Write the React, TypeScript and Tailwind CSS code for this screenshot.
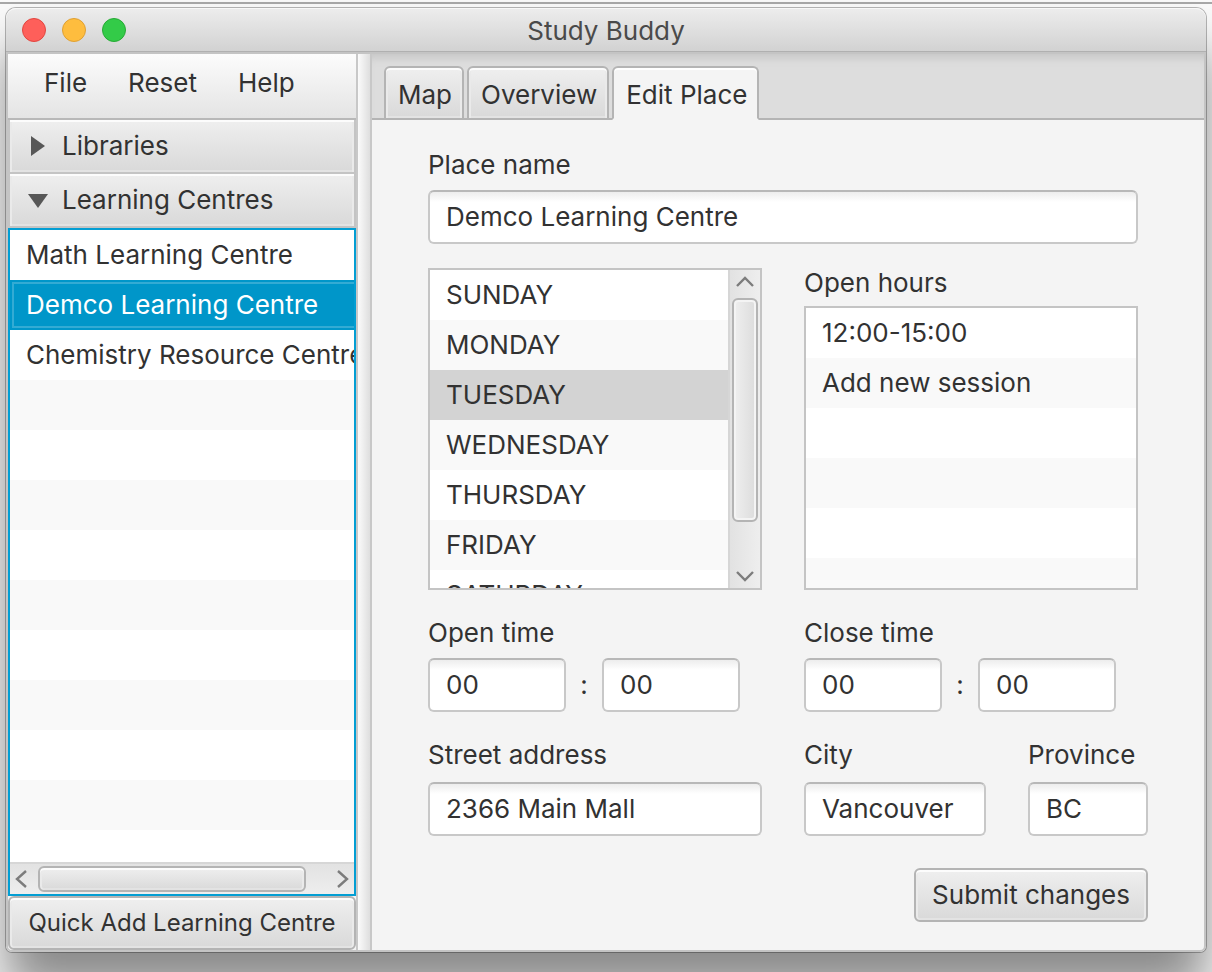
import { useState } from "react";
import type { ReactNode } from "react";
import clsx from "clsx";

const MENUS = ["File", "Reset", "Help"];
const CENTRES = ["Math Learning Centre", "Demco Learning Centre", "Chemistry Resource Centre"];
const TABS = ["Map", "Overview", "Edit Place"];
const DAYS = ["SUNDAY", "MONDAY", "TUESDAY", "WEDNESDAY", "THURSDAY", "FRIDAY", "SATURDAY"];
const SESSIONS = ["12:00-15:00", "Add new session"];

const FACE =
  "bg-linear-to-b from-[#efefef] to-[#d9d9d9] shadow-[inset_0_2px_0_#fcfcfc,inset_2px_0_0_#eaeaea,inset_-2px_0_0_#eaeaea,inset_0_-2px_0_#e3e3e3]";
const STRIPES =
  "bg-[repeating-linear-gradient(to_bottom,#ffffff_0px,#ffffff_50px,#f9f9f9_50px,#f9f9f9_100px)]";

function Chevron({ d }: { d: string }) {
  return (
    <svg viewBox="0 0 20 20" className="size-5" fill="none" stroke="#7c7c7c" strokeWidth="2.4">
      <path d={d} />
    </svg>
  );
}

function SectionHeader({ title, open, onClick }: { title: string; open: boolean; onClick: () => void }) {
  return (
    <div className="border-x-2 border-b-2 border-[#c4c4c4]">
      <button
        type="button"
        aria-expanded={open}
        onClick={onClick}
        className={clsx("flex h-[52px] w-full items-center gap-3.5 pl-[18px] text-left", FACE)}
      >
        <svg viewBox="0 0 20 20" className="size-5" fill="#575757">
          {open ? <path d="M0 4h20L10 18z" /> : <path d="M3 0v20l14-10z" />}
        </svg>
        {title}
      </button>
    </div>
  );
}

function TextBox({ id, label, initial }: { id: string; label?: string; initial: string }) {
  return (
    <input
      id={id}
      aria-label={label}
      type="text"
      defaultValue={initial}
      className="h-[54px] w-full min-w-0 rounded-md border-2 border-[#c8c8c8] border-t-[#b8b8b8] bg-white bg-linear-to-b from-[#ededed] to-white to-[10px] px-4 pb-0.5 outline-none"
    />
  );
}

function Label({ htmlFor, children }: { htmlFor: string; children: ReactNode }) {
  return (
    <label htmlFor={htmlFor} className="block leading-[30px]">
      {children}
    </label>
  );
}

function TimeGroup({ title, prefix }: { title: string; prefix: string }) {
  return (
    <div className="flex flex-col gap-2.5">
      <Label htmlFor={`${prefix}-hour`}>{title}</Label>
      <div className="flex items-center">
        <div className="w-[138px]">
          <TextBox id={`${prefix}-hour`} initial="00" />
        </div>
        <span className="w-9 text-center">:</span>
        <div className="w-[138px]">
          <TextBox id={`${prefix}-minute`} label={`${title} minutes`} initial="00" />
        </div>
      </div>
    </div>
  );
}

export default function App() {
  const [centre, setCentre] = useState(1);
  const [tab, setTab] = useState(2);
  const [day, setDay] = useState(2);
  const [open, setOpen] = useState("Learning Centres");

  return (
    <div className="flex min-h-screen flex-col overflow-hidden bg-[#fafafa] pb-5 font-['Inter','Liberation_Sans',sans-serif] text-[26px] leading-[50px] text-[#323232]">
      <div className="mt-0.5 h-0.5 bg-[#a8a8a8]" />
      <div className="mx-1.5 mt-1 flex flex-1 flex-col rounded-t-[10px] rounded-b-md shadow-[0_0_0_1px_rgba(0,0,0,0.28),0_40px_50px_0_rgba(0,0,0,0.45)]">
        <header className="grid h-11 grid-cols-[1fr_auto_1fr] items-center rounded-t-[10px] border-b border-[#b0b0b0] bg-linear-to-b from-[#ededed] to-[#d2d2d2] px-4 shadow-[inset_0_1px_0_#f8f8f8]">
          <div className="flex gap-4">
            <button type="button" aria-label="Close" className="size-6 rounded-full border border-[#e2463f] bg-[#fe5f5a]" />
            <button type="button" aria-label="Minimize" className="size-6 rounded-full border border-[#dfa033] bg-[#febd3e]" />
            <button type="button" aria-label="Zoom" className="size-6 rounded-full border border-[#27aa35] bg-[#33cb48]" />
          </div>
          <h1 className="pt-0.5 text-[26px] leading-8 text-[#4a4a4a]">Study Buddy</h1>
        </header>

        <div className="flex flex-1 rounded-b-md border-2 border-[#c4c4c4] bg-[#f4f4f4]">
          <aside className="flex w-[348px] shrink-0 flex-col">
            <nav className="flex h-[66px] items-start gap-[41px] border-b-2 border-[#b8b8b8] bg-linear-to-b from-[#fcfcfc] to-[#e4e4e4] pt-1 pl-9">
              {MENUS.map((m) => (
                <button key={m} type="button">
                  {m}
                </button>
              ))}
            </nav>
            <SectionHeader title="Libraries" open={open === "Libraries"} onClick={() => setOpen("Libraries")} />
            <SectionHeader
              title="Learning Centres"
              open={open === "Learning Centres"}
              onClick={() => setOpen("Learning Centres")}
            />
            <div className="flex flex-1 flex-col border-2 border-[#039ed3]">
              <ul className={clsx("h-0 grow overflow-hidden", STRIPES)}>
                {CENTRES.map((c, i) => (
                  <li key={c}>
                    <button
                      type="button"
                      onClick={() => setCentre(i)}
                      className={clsx(
                        "block h-[50px] w-[calc(100%+4px)] pl-4 text-left whitespace-nowrap",
                        i === centre
                          ? "bg-[#0096c9] text-white shadow-[inset_0_0_0_2px_#0096c9,inset_0_0_0_4px_#33abd4]"
                          : "bg-white",
                      )}
                    >
                      {c}
                    </button>
                  </li>
                ))}
              </ul>
              <div className="flex h-8 items-center justify-between border-t-2 border-[#d6d6d6] bg-linear-to-b from-[#e2e2e2] to-[#eeeeee] px-0.5">
                <button type="button" aria-label="Scroll left">
                  <Chevron d="M14 2 5 10l9 8" />
                </button>
                <div className={clsx("mr-[26px] ml-1.5 h-[26px] flex-1 rounded-md border-2 border-[#b4b4b4]", FACE)} />
                <button type="button" aria-label="Scroll right">
                  <Chevron d="M6 2l9 8-9 8" />
                </button>
              </div>
            </div>
            <button
              type="button"
              className={clsx("h-[54px] rounded-md border-2 border-[#b4b4b4] text-[24px] whitespace-nowrap", FACE)}
            >
              Quick Add Learning Centre
            </button>
          </aside>

          <div className="w-4 shrink-0 border-x-2 border-[#c8c8c8] bg-linear-to-r from-[#fbfbfb] to-[#dedede]" />

          <main className="flex min-w-0 flex-1 flex-col">
            <div
              role="tablist"
              className="flex h-[66px] items-end gap-[3px] bg-[#dddddd] pl-3 shadow-[inset_0_-2px_0_#b4b4b4,inset_0_10px_8px_-6px_#c6c6c6]"
            >
              {TABS.map((t, i) => (
                <button
                  key={t}
                  type="button"
                  role="tab"
                  aria-selected={i === tab}
                  onClick={() => setTab(i)}
                  className={clsx(
                    "h-[54px] rounded-t-md border-2 border-[#b4b4b4] pt-1 pr-2.5 pl-3 leading-[46px]",
                    i === tab ? "border-b-[#f4f4f4] bg-[#f4f4f4] shadow-[inset_0_2px_0_#ffffff]" : FACE,
                  )}
                >
                  {t}
                </button>
              ))}
            </div>

            <form className="flex flex-col px-14 pt-[30px] pb-7" onSubmit={(e) => e.preventDefault()}>
              <div className="mr-2.5 flex flex-col gap-2.5">
                <Label htmlFor="place">Place name</Label>
                <TextBox id="place" initial="Demco Learning Centre" />
              </div>

              <div className="mt-6 mr-2.5 grid grid-cols-2 gap-[42px]">
                <div className="flex h-[322px] border-2 border-[#c4c4c4] bg-white">
                  <ul className={clsx("flex-1 overflow-hidden", STRIPES)} aria-label="Day">
                    {DAYS.map((d, i) => (
                      <li key={d}>
                        <button
                          type="button"
                          onClick={() => setDay(i)}
                          className={clsx("block h-[50px] w-full pl-4 text-left", i === day && "bg-[#d3d3d3]")}
                        >
                          {d}
                        </button>
                      </li>
                    ))}
                  </ul>
                  <div className="flex w-8 flex-col items-center justify-between border-l-2 border-[#d6d6d6] bg-linear-to-r from-[#e2e2e2] to-[#eeeeee] py-0.5">
                    <button type="button" aria-label="Scroll up">
                      <Chevron d="M2 14l8-8 8 8" />
                    </button>
                    <div className="mt-1.5 mb-11 w-[26px] flex-1 rounded-md border-2 border-[#b4b4b4] bg-linear-to-r from-[#efefef] to-[#dcdcdc] shadow-[inset_0_0_0_2px_#f4f4f4]" />
                    <button type="button" aria-label="Scroll down">
                      <Chevron d="M2 6l8 8 8-8" />
                    </button>
                  </div>
                </div>
                <div className="flex flex-col gap-2">
                  <h2 className="leading-[30px]">Open hours</h2>
                  <ul className={clsx("flex-1 border-2 border-[#c4c4c4]", STRIPES)} aria-label="Open hours">
                    {SESSIONS.map((s) => (
                      <li key={s}>
                        <button type="button" className="block h-[50px] w-full pl-4 text-left">
                          {s}
                        </button>
                      </li>
                    ))}
                  </ul>
                </div>
              </div>

              <div className="mt-7 mr-2.5 grid grid-cols-2 gap-[42px]">
                <TimeGroup title="Open time" prefix="open" />
                <TimeGroup title="Close time" prefix="close" />
              </div>

              <div className="mt-7 flex gap-[42px]">
                <div className="flex min-w-0 flex-1 flex-col gap-3">
                  <Label htmlFor="street">Street address</Label>
                  <TextBox id="street" initial="2366 Main Mall" />
                </div>
                <div className="flex w-[182px] flex-col gap-3">
                  <Label htmlFor="city">City</Label>
                  <TextBox id="city" initial="Vancouver" />
                </div>
                <div className="flex w-[120px] flex-col gap-3">
                  <Label htmlFor="province">Province</Label>
                  <TextBox id="province" initial="BC" />
                </div>
              </div>

              <button
                type="submit"
                className={clsx("mt-8 h-[54px] self-end rounded-md border-2 border-[#b4b4b4] px-4", FACE)}
              >
                Submit changes
              </button>
            </form>
          </main>
        </div>
      </div>
    </div>
  );
}
